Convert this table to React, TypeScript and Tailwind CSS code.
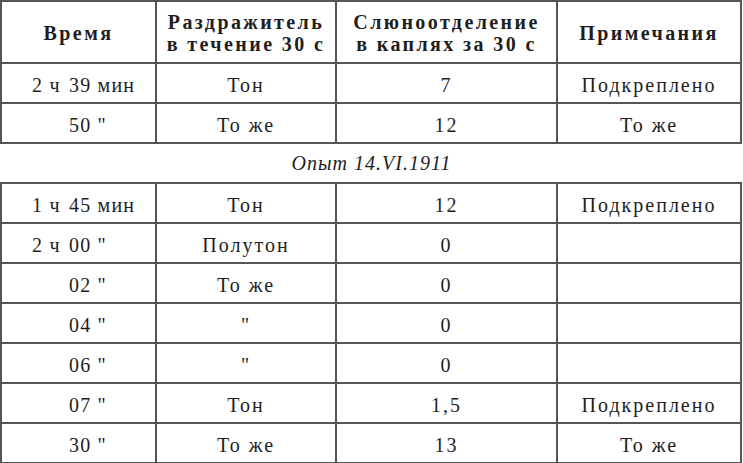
const HEAD = [
  ["Время"],
  ["Раздражитель", "в течение 30 с"],
  ["Слюноотделение", "в каплях за 30 с"],
  ["Примечания"],
]

type Row = { h?: string; m: string; stim: string; drops: string; note: string }

const FIRST: Row[] = [
  { h: "2 ч", m: "39 мин", stim: "Тон", drops: "7", note: "Подкреплено" },
  { m: "50 \"", stim: "То же", drops: "12", note: "То же" },
]

const SECOND: Row[] = [
  { h: "1 ч", m: "45 мин", stim: "Тон", drops: "12", note: "Подкреплено" },
  { h: "2 ч", m: "00 \"", stim: "Полутон", drops: "0", note: "" },
  { m: "02 \"", stim: "То же", drops: "0", note: "" },
  { m: "04 \"", stim: "\"", drops: "0", note: "" },
  { m: "06 \"", stim: "\"", drops: "0", note: "" },
  { m: "07 \"", stim: "Тон", drops: "1,5", note: "Подкреплено" },
  { m: "30 \"", stim: "То же", drops: "13", note: "То же" },
]

const GRID = "grid grid-cols-[153px_178px_219px_182px] gap-[2px] bg-[#555] p-[2px] w-[742px]"

function DataRows({ rows }: { rows: Row[] }) {
  return (
    <>
      {rows.map((r, i) => (
        <div key={i} className="contents">
          <div className="bg-white h-[38px] flex items-center pl-[30px] pt-[3px] whitespace-pre tracking-[0.06em]">
            <span className="w-[37px] shrink-0">{r.h ?? ""}</span>
            <span>{r.m}</span>
          </div>
          <div className="bg-white h-[38px] flex items-center justify-center pt-[3px]">{r.stim}</div>
          <div className="bg-white h-[38px] flex items-center justify-center pt-[3px]">{r.drops}</div>
          <div className="bg-white h-[38px] flex items-center justify-center pt-[3px]">{r.note}</div>
        </div>
      ))}
    </>
  )
}

export default function App() {
  return (
    <div
      className="w-[743px] h-[463px] overflow-hidden bg-white text-[#1e1e1e] text-[20px] leading-[22px] tracking-[0.1em]"
      style={{ fontFamily: '"Liberation Serif", serif' }}
    >
      <div className={GRID}>
        {HEAD.map((lines, i) => (
          <div
            key={i}
            className="bg-white h-[60px] flex flex-col items-center justify-center font-bold tracking-[0.12em] pt-[2px]"
          >
            {lines.map((l) => (
              <span key={l}>{l}</span>
            ))}
          </div>
        ))}
        <DataRows rows={FIRST} />
      </div>

      <div className="h-[38px] flex items-center justify-center italic tracking-[0.05em] pb-[1px]">Опыт 14.VI.1911</div>

      <div className={GRID}>
        <DataRows rows={SECOND} />
      </div>
    </div>
  )
}
